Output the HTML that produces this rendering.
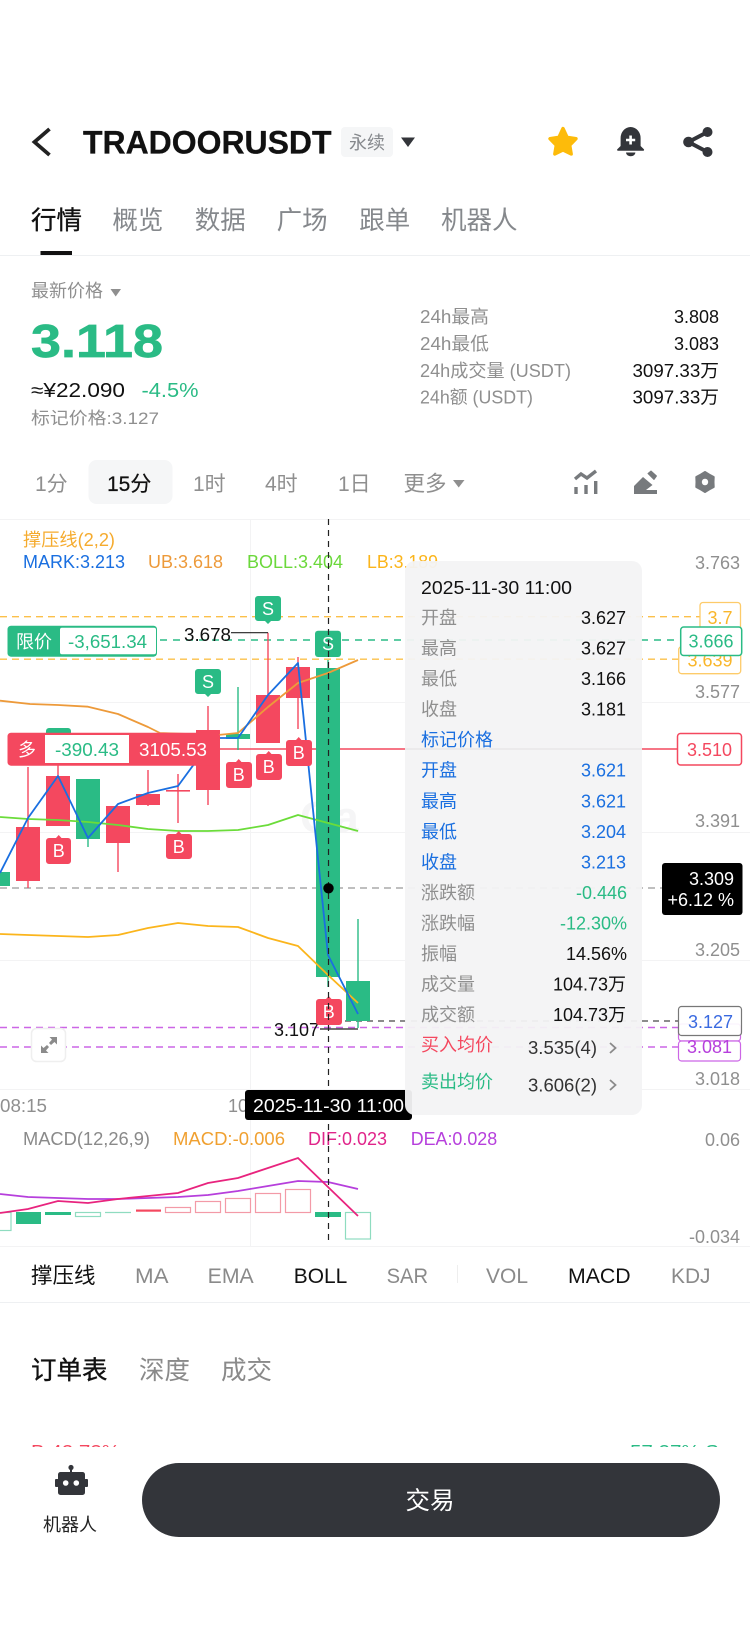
<!DOCTYPE html>
<html lang="zh"><head><meta charset="utf-8"><title>TRADOORUSDT</title>
<style>
html,body{margin:0;padding:0;background:#fff;width:750px;height:1631px;overflow:hidden}
svg{display:block}
body>svg{filter:blur(.3px)}
text{font-family:"Liberation Sans","Noto Sans CJK SC",sans-serif;font-size:18px;fill:#111}
.g{fill:#8f8f8f}
.gr{fill:#2abb85}
.bl{fill:#1a6fe0}
.w{fill:#fff}
.k{stroke:#111;stroke-width:.35px}
.r{text-anchor:end}
.m{text-anchor:middle}
</style></head><body>
<svg width="750" height="1631" viewBox="0 0 750 1631" xmlns="http://www.w3.org/2000/svg">
<rect width="750" height="1631" fill="#fff"/>

<!-- header -->
<path d="M49.5 129 L34.5 142 L49.5 155" fill="none" stroke="#222" stroke-width="3.8"/>
<text x="83" y="153.5" font-weight="700" style="font-size:32px;stroke:#111;stroke-width:.3px" textLength="248.5" lengthAdjust="spacingAndGlyphs">TRADOORUSDT</text>
<rect x="341" y="127" width="52" height="30" rx="4" fill="#f5f6f7"/>
<text x="349" y="149" style="font-size:18px;fill:#85888c">永续</text>
<path d="M401 137.5 H415 L408 147Z" fill="#33353a"/>
<path d="M563 128.5 L567.1 137.3 L576 138.7 L569.7 145.2 L571.2 154 L563 150 L554.8 154 L556.3 145.2 L550 138.7 L558.9 137.3Z" fill="#fdbb0a" stroke="#fdbb0a" stroke-width="3.4" stroke-linejoin="round"/>
<path d="M620.6 146 V138 a10 11 0 0 1 20 0 V146 l3.4 3.4 a1 1 0 0 1 -1 1.4 H618.2 a1 1 0 0 1 -1 -1.4Z" fill="#33353a"/>
<path d="M626 152.5 H635.4 a4.7 3.8 0 0 1 -9.4 0Z" fill="#33353a"/>
<path d="M630.6 135.5 V144.5 M626 140 H635.2" stroke="#fff" stroke-width="2.6"/>
<g fill="#33353a" stroke="#33353a"><circle cx="707.5" cy="132" r="5" stroke="none"/><circle cx="688.5" cy="142" r="5.3" stroke="none"/><circle cx="707.5" cy="152" r="5" stroke="none"/><path d="M707.5 132 L688.5 142 L707.5 152" fill="none" stroke-width="4"/></g>

<!-- tabs -->
<text x="31" y="229" class="k" style="font-size:25.5px">行情</text>
<text x="112.4" y="229" style="font-size:25.5px;fill:#85888c">概览</text>
<text x="194.7" y="229" style="font-size:25.5px;fill:#85888c">数据</text>
<text x="276.6" y="229" style="font-size:25.5px;fill:#85888c">广场</text>
<text x="359.3" y="229" style="font-size:25.5px;fill:#85888c">跟单</text>
<text x="441" y="229" style="font-size:25.5px;fill:#85888c">机器人</text>
<rect x="0" y="255" width="750" height="1" fill="#eef0f2"/>
<rect x="40.5" y="251" width="31.5" height="4" fill="#111"/>

<!-- price -->
<text x="31" y="297" class="g">最新价格</text>
<path d="M110.5 289 H121 L115.7 296.5Z" fill="#8f8f8f"/>
<text x="31" y="357" class="gr" font-weight="700" style="font-size:46.5px;stroke:#2abb85;stroke-width:.7px" textLength="132" lengthAdjust="spacingAndGlyphs">3.118</text>
<text x="31" y="397" style="font-size:20px" textLength="94" lengthAdjust="spacingAndGlyphs">≈¥22.090</text>
<text x="141.5" y="397" class="gr" style="font-size:20px" textLength="57" lengthAdjust="spacingAndGlyphs">-4.5%</text>
<text x="31" y="424" class="g" style="font-size:17px" textLength="128" lengthAdjust="spacingAndGlyphs">标记价格:3.127</text>
<text x="420" y="323" class="g" textLength="69" lengthAdjust="spacingAndGlyphs">24h最高</text>
<text x="420" y="350" class="g" textLength="69" lengthAdjust="spacingAndGlyphs">24h最低</text>
<text x="420" y="377" class="g" textLength="151" lengthAdjust="spacingAndGlyphs">24h成交量 (USDT)</text>
<text x="420" y="403.5" class="g" textLength="113" lengthAdjust="spacingAndGlyphs">24h额 (USDT)</text>
<text x="719" y="323" class="r">3.808</text>
<text x="719" y="350" class="r">3.083</text>
<text x="632.5" y="377" textLength="86.5" lengthAdjust="spacingAndGlyphs">3097.33万</text>
<text x="632.5" y="403.5" textLength="86.5" lengthAdjust="spacingAndGlyphs">3097.33万</text>

<!-- time row -->
<rect x="88.5" y="460" width="84" height="44" rx="8" fill="#f5f6f7"/>
<g>
<text x="35" y="491" class="g" style="font-size:21px">1分</text>
<text x="107" y="491" class="k" style="font-size:21px;stroke-width:.2px">15分</text>
<text x="193" y="491" class="g" style="font-size:21px">1时</text>
<text x="265" y="491" class="g" style="font-size:21px">4时</text>
<text x="338" y="491" class="g" style="font-size:21px">1日</text>
<text x="403.5" y="491" class="g" style="font-size:21.5px">更多</text>
</g>
<path d="M453 480 H464.5 L458.7 487.5Z" fill="#8f8f8f"/>
<g fill="none" stroke="#777a7d" stroke-width="3.4">
<path d="M575 479 L581 474 L587 478 L596 471"/>
<path d="M576 487 V494 M586 485 V494 M595.7 481 V494"/>
</g>
<path d="M634 486 L643 477 L652.5 485 L646 490 H657 V494 H634Z" fill="#777a7d"/>
<path d="M648 473.5 L651 471 L656.5 476 L654 479.5Z" fill="#777a7d" stroke="#777a7d" stroke-width="1" stroke-linejoin="round"/>
<path fill-rule="evenodd" d="M705 472 L709.25 474.6 L713.7 477 L713.5 482 L713.7 487 L709.25 489.4 L705 492 L700.75 489.4 L696.3 487 L696.5 482 L696.3 477 L700.75 474.6Z M705 477.8 a4.2 4.2 0 1 0 .01 0Z" fill="#777a7d" stroke="#777a7d" stroke-width="2" stroke-linejoin="round"/>

<!-- chart grid -->
<g stroke="#f3f3f4" stroke-width="1">
<path d="M0 519.5 H750 M0 702.5 H750 M0 832.5 H750 M0 960.5 H750 M0 1089.5 H750 M0 1246.5 H750 M250.5 519 V1246"/>
</g>
<!-- watermark -->
<text x="300" y="832" font-weight="700" style="font-size:44px;fill:#f5f5f6">Ga</text>

<!-- horizontal lines -->
<g fill="none" stroke-width="1.4">
<path d="M0 616.7 H700" stroke="#fbc04a" stroke-dasharray="7 5"/>
<path d="M0 659.2 H680" stroke="#fbc04a" stroke-dasharray="7 5"/>
<path d="M160 640 H680" stroke="#2abb85" stroke-dasharray="7 6"/>
<path d="M220 749 H678" stroke="#f4485f"/>
<path d="M0 888 H662" stroke="#aaa" stroke-dasharray="7 5"/>
<path d="M345 1021 H678" stroke="#666" stroke-dasharray="6 5"/>
<path d="M0 1027.5 H678" stroke="#cc66e6" stroke-dasharray="7 5"/>
<path d="M0 1047 H678" stroke="#cc66e6" stroke-dasharray="7 5"/>
</g>

<!-- candles -->
<g fill="#f4485f" stroke="#f4485f">
<g stroke-width="1.4" fill="none">
<path d="M28 767 V888 M58 750 V776 M118 806 V872 M148 770 V806 M178 774 V823 M208 706 V805 M268 632.7 V695 M298 657 V729"/>
</g>
<g stroke="none">
<rect x="16" y="827" width="24" height="54"/>
<rect x="46" y="776" width="24" height="50"/>
<rect x="106" y="806" width="24" height="37"/>
<rect x="136" y="794" width="24" height="11"/>
<rect x="166" y="790" width="24" height="1.6"/>
<rect x="196" y="730" width="24" height="60"/>
<rect x="256" y="695" width="24" height="48"/>
<rect x="286" y="667" width="24" height="31"/>
</g>
</g>
<g fill="#2abb85" stroke="#2abb85">
<g stroke-width="1.4" fill="none">
<path d="M88 779 V847 M238 687 V750 M328 660 V987 M358 919 V1028"/>
</g>
<g stroke="none">
<rect x="-10" y="872" width="20" height="14"/>
<rect x="46" y="728" width="25" height="8" rx="3"/>
<rect x="76" y="779" width="24" height="60"/>
<rect x="226" y="734" width="24" height="5"/>
<rect x="316" y="668" width="24" height="309"/>
<rect x="346" y="981" width="24" height="40"/>
</g>
</g>

<!-- indicator lines -->
<g fill="none" stroke-width="1.8" stroke-linejoin="round">
<polyline stroke="#fbb51c" points="0,934 28,935 58,936 88,937 118,935 148,928 178,923 208,926 238,927 268,938 298,946 328,975 358,1003"/>
<polyline stroke="#6bdc3a" points="0,817 28,819 58,820 88,822 118,825 148,829 178,831 208,831 238,830 268,825 298,815 328,823 358,831"/>
<polyline stroke="#ed9a3a" points="0,700.7 30,704 58,705 88,706.7 118,714 148,727 160,733 218,735 238,733 268,707 298,683 328,673 358,660"/>
<polyline stroke="#1a6fe0" points="0,873 28,818 58,776 88,838 118,804 148,793 178,786 208,745 218,738 238,738 268,695 298,663 317,849 328,955 358,1014"/>
</g>

<!-- price callouts -->
<text x="184" y="641" textLength="47" lengthAdjust="spacingAndGlyphs">3.678</text>
<path d="M231 632.7 H268" stroke="#222" stroke-width="1.2"/>
<text x="274" y="1036" textLength="45" lengthAdjust="spacingAndGlyphs">3.107</text>
<path d="M320 1029 H358" stroke="#222" stroke-width="1.2"/>

<!-- S / B markers -->
<g>
<path d="M258 596 H278 a3 3 0 0 1 3 3 V618 a3 3 0 0 1 -3 3 H271 L268 624 L265 621 H258 a3 3 0 0 1 -3 -3 V599 a3 3 0 0 1 3 -3Z" fill="#2abb85"/>
<text x="268" y="615" class="w m" style="font-size:18px">S</text>
<path d="M198 669 H218 a3 3 0 0 1 3 3 V691 a3 3 0 0 1 -3 3 H211 L208 697 L205 694 H198 a3 3 0 0 1 -3 -3 V672 a3 3 0 0 1 3 -3Z" fill="#2abb85"/>
<text x="208" y="688" class="w m">S</text>
<path d="M229 762 H236 L238.7 759 L241.5 762 H249 a3 3 0 0 1 3 3 V785 a3 3 0 0 1 -3 3 H229 a3 3 0 0 1 -3 -3 V765 a3 3 0 0 1 3 -3Z" fill="#f4485f"/>
<text x="238.7" y="781" class="w m">B</text>
<path d="M259 754 H266 L268.7 751 L271.5 754 H279 a3 3 0 0 1 3 3 V777 a3 3 0 0 1 -3 3 H259 a3 3 0 0 1 -3 -3 V757 a3 3 0 0 1 3 -3Z" fill="#f4485f"/>
<text x="268.7" y="773" class="w m">B</text>
<path d="M289 740 H296 L298.7 737 L301.5 740 H309 a3 3 0 0 1 3 3 V763 a3 3 0 0 1 -3 3 H289 a3 3 0 0 1 -3 -3 V743 a3 3 0 0 1 3 -3Z" fill="#f4485f"/>
<text x="298.7" y="759" class="w m">B</text>
<path d="M49 838 H56 L58.7 835 L61.5 838 H68 a3 3 0 0 1 3 3 V861 a3 3 0 0 1 -3 3 H49 a3 3 0 0 1 -3 -3 V841 a3 3 0 0 1 3 -3Z" fill="#f4485f"/>
<text x="58.7" y="857" class="w m">B</text>
<path d="M169 834 H176 L178.7 831 L181.5 834 H189 a3 3 0 0 1 3 3 V856 a3 3 0 0 1 -3 3 H169 a3 3 0 0 1 -3 -3 V837 a3 3 0 0 1 3 -3Z" fill="#f4485f"/>
<text x="178.7" y="853" class="w m">B</text>
</g>

<!-- 限价 badge -->
<rect x="7.5" y="625.7" width="149.5" height="31" rx="3.5" fill="#2abb85"/>
<rect x="60" y="627.7" width="96" height="26.5" rx="2" fill="#fff"/>
<text x="16" y="648" class="w">限价</text>
<text x="68" y="648" class="gr" textLength="79" lengthAdjust="spacingAndGlyphs">-3,651.34</text>
<!-- 多 badge -->
<rect x="7.5" y="732.7" width="212.5" height="33" rx="3.5" fill="#f4485f"/>
<rect x="45" y="735" width="84" height="28" fill="#fff"/>
<text x="18" y="756" class="w">多</text>
<text x="55" y="756" class="gr" textLength="64" lengthAdjust="spacingAndGlyphs">-390.43</text>
<text x="139" y="756" class="w" textLength="68" lengthAdjust="spacingAndGlyphs">3105.53</text>

<!-- S and B on crosshair candle -->
<path d="M318 630.7 H338 a3 3 0 0 1 3 3 V654 a3 3 0 0 1 -3 3 H318 a3 3 0 0 1 -3 -3 V633.7 a3 3 0 0 1 3 -3Z" fill="#2abb85"/>
<text x="328" y="650" class="w m">S</text>
<path d="M319 999 H326 L328.7 996 L331.5 999 H339 a3 3 0 0 1 3 3 V1022 a3 3 0 0 1 -3 3 H319 a3 3 0 0 1 -3 -3 V1002 a3 3 0 0 1 3 -3Z" fill="#f4485f"/>
<text x="328.7" y="1018" class="w m">B</text>

<!-- legend -->
<text x="23" y="546" style="font-size:18px;fill:#f5ab2e" textLength="92" lengthAdjust="spacingAndGlyphs">撑压线(2,2)</text>
<text x="23" y="568" class="bl" textLength="102" lengthAdjust="spacingAndGlyphs">MARK:3.213</text>
<text x="148" y="568" style="fill:#ed9a3a" textLength="75" lengthAdjust="spacingAndGlyphs">UB:3.618</text>
<text x="247" y="568" style="fill:#6bd83b" textLength="96" lengthAdjust="spacingAndGlyphs">BOLL:3.404</text>
<text x="367" y="568" style="fill:#fbb51c" textLength="71" lengthAdjust="spacingAndGlyphs">LB:3.189</text>

<!-- expand btn -->
<rect x="31.5" y="1028.5" width="34" height="33" rx="5" fill="#fff" stroke="#efefef" stroke-width="1.5"/>
<g fill="#8b8b8b"><path d="M41 1053 V1045.5 L43.5 1048 L47 1045 L49 1047 L46 1050.5 L48.5 1053Z"/><path d="M57 1037 V1044.5 L54.5 1042 L51 1045 L49 1043 L52 1039.5 L49.5 1037Z"/></g>

<!-- axis bottom -->
<text x="0" y="1112" class="g" textLength="47" lengthAdjust="spacingAndGlyphs">08:15</text>
<text x="228" y="1112" class="g">10</text>

<!-- macd -->
<text x="23" y="1145" style="fill:#8a8a8a" textLength="127" lengthAdjust="spacingAndGlyphs">MACD(12,26,9)</text>
<text x="173" y="1145" style="fill:#f0a030" textLength="112" lengthAdjust="spacingAndGlyphs">MACD:-0.006</text>
<text x="308" y="1145" style="fill:#e0248a" textLength="79" lengthAdjust="spacingAndGlyphs">DIF:0.023</text>
<text x="410.7" y="1145" style="fill:#b63fdc" textLength="86.5" lengthAdjust="spacingAndGlyphs">DEA:0.028</text>
<g fill="none" stroke-width="1.2">
<g stroke="#8fdcc0"><rect x="-14" y="1212.5" width="25" height="18"/><rect x="75.5" y="1212.5" width="25" height="4"/><rect x="345.5" y="1212.5" width="25" height="26.5"/><path d="M105 1212.5 H131"/></g>
<g stroke="#f39aa7"><rect x="165.5" y="1207.5" width="25" height="5"/><rect x="195.5" y="1201.5" width="25" height="11"/><rect x="225.5" y="1198.5" width="25" height="14"/><rect x="255.5" y="1193.5" width="25" height="19"/><rect x="285.5" y="1189.5" width="25" height="23"/></g>
</g>
<rect x="16" y="1212" width="25" height="12" fill="#2abb85"/>
<rect x="45" y="1212" width="26" height="3" fill="#2abb85"/>
<rect x="136" y="1209.5" width="25" height="2.2" fill="#f4485f"/>
<rect x="315" y="1212" width="26" height="5" fill="#2abb85"/>
<polyline fill="none" stroke="#b63fdc" stroke-width="1.8" points="0,1194 28,1197 58,1198 88,1199 118,1199 148,1198 178,1197 208,1195 238,1191 268,1186 298,1181 328,1182 358,1189"/>
<polyline fill="none" stroke="#e8247e" stroke-width="1.8" points="0,1213 28,1209 58,1201 88,1203 118,1199 148,1196 178,1193 208,1183 238,1178 268,1168 298,1158 328,1187 358,1216"/>

<!-- crosshair -->
<path d="M328.5 519 V1243" stroke="#222" stroke-width="1.2" stroke-dasharray="6 5" fill="none"/>
<circle cx="328.5" cy="888.3" r="5.2" fill="#000"/>

<!-- time tag -->
<rect x="245" y="1090" width="167" height="30" rx="3" fill="#000"/>
<text x="253" y="1112" class="w" textLength="151" lengthAdjust="spacingAndGlyphs">2025-11-30 11:00</text>

<!-- right axis -->
<text x="740" y="569" class="g r">3.763</text>
<text x="740" y="698" class="g r">3.577</text>
<text x="740" y="827" class="g r">3.391</text>
<text x="740" y="956" class="g r">3.205</text>
<text x="740" y="1085" class="g r">3.018</text>
<text x="740" y="1146" class="g r">0.06</text>
<text x="740" y="1243" class="g r">-0.034</text>

<!-- tooltip -->
<rect x="405" y="561" width="237" height="554" rx="10" fill="#f3f3f4" fill-opacity=".95"/>
<path d="M405 749 H642" stroke="#e8e8e9" stroke-width="1.4"/>
<text x="421" y="594" textLength="151" lengthAdjust="spacingAndGlyphs">2025-11-30 11:00</text>
<g>
<text x="421" y="624" class="g">开盘</text><text x="626" y="624" class="r">3.627</text>
<text x="421" y="654.7" class="g">最高</text><text x="626" y="654.7" class="r">3.627</text>
<text x="421" y="685" class="g">最低</text><text x="626" y="685" class="r">3.166</text>
<text x="421" y="715.7" class="g">收盘</text><text x="626" y="715.7" class="r">3.181</text>
<text x="421" y="746" class="bl">标记价格</text>
<text x="421" y="776.7" class="bl">开盘</text><text x="626" y="776.7" class="r bl">3.621</text>
<text x="421" y="807.7" class="bl">最高</text><text x="626" y="807.7" class="r bl">3.621</text>
<text x="421" y="838" class="bl">最低</text><text x="626" y="838" class="r bl">3.204</text>
<text x="421" y="868.3" class="bl">收盘</text><text x="626" y="868.3" class="r bl">3.213</text>
<text x="421" y="899" class="g">涨跌额</text><text x="627" y="899" class="r gr">-0.446</text>
<text x="421" y="929.3" class="g">涨跌幅</text><text x="627" y="929.3" class="r gr">-12.30%</text>
<text x="421" y="960" class="g">振幅</text><text x="627" y="960" class="r">14.56%</text>
<text x="421" y="990.7" class="g">成交量</text><text x="626" y="990.7" class="r">104.73万</text>
<text x="421" y="1021" class="g">成交额</text><text x="626" y="1021" class="r">104.73万</text>
<text x="421" y="1051" style="fill:#f4485f">买入均价</text><text x="528" y="1054" style="fill:#333" textLength="69" lengthAdjust="spacingAndGlyphs">3.535(4)</text>
<text x="421" y="1088" class="gr">卖出均价</text><text x="528" y="1091.7" style="fill:#333" textLength="69" lengthAdjust="spacingAndGlyphs">3.606(2)</text>
</g>
<path d="M610 1043 L615.5 1048 L610 1053 M610 1080 L615.5 1085 L610 1090" fill="none" stroke="#8a8a8a" stroke-width="1.8"/>

<!-- right tags -->
<rect x="700" y="602.5" width="40.5" height="30" rx="3" fill="#fff" stroke="#fdcb6a" stroke-width="1.3"/>
<text x="720" y="624" class="m" style="fill:#f9b62a">3.7</text>
<rect x="678.7" y="646.7" width="62" height="27" rx="3" fill="#fff" stroke="#fdcb6a" stroke-width="1.3"/>
<text x="710" y="666.5" class="m" style="fill:#f9b62a">3.639</text>
<rect x="680.7" y="627" width="61" height="28.5" rx="3" fill="#fff" stroke="#2abb85" stroke-width="1.5"/>
<text x="711" y="647.7" class="m gr">3.666</text>
<rect x="677.5" y="733.5" width="64" height="31.5" rx="3" fill="#fff" stroke="#f4485f" stroke-width="1.5"/>
<text x="709.5" y="756" class="m" style="fill:#f4485f">3.510</text>
<rect x="662" y="863" width="80.5" height="52" rx="3" fill="#000"/>
<text x="734" y="885" class="w r">3.309</text>
<text x="734" y="906" class="w r">+6.12 %</text>
<rect x="678.5" y="1024" width="62" height="17" rx="3" fill="#fff" stroke="#cc66e6" stroke-width="1.2"/>
<rect x="678.5" y="1041" width="62" height="20" rx="3" fill="#fff" stroke="#cc66e6" stroke-width="1.2"/>
<text x="709.5" y="1053" class="m" style="fill:#b63fdc">3.081</text>
<rect x="678.5" y="1006.5" width="63" height="29" rx="3" fill="#fff" fill-opacity=".92" stroke="#777" stroke-width="1.2"/>
<text x="710.5" y="1028" class="m" style="fill:#3a6ae0">3.127</text>

<!-- indicators tab row -->
<g>
<text x="31" y="1283" style="font-size:21.5px">撑压线</text>
<text x="135" y="1283" style="font-size:21px;fill:#8a8a8a" textLength="33.5" lengthAdjust="spacingAndGlyphs">MA</text>
<text x="207.7" y="1283" style="font-size:21px;fill:#8a8a8a" textLength="46" lengthAdjust="spacingAndGlyphs">EMA</text>
<text x="293.8" y="1283" style="font-size:21px" textLength="53.5" lengthAdjust="spacingAndGlyphs">BOLL</text>
<text x="386.6" y="1283" style="font-size:21px;fill:#8a8a8a" textLength="41.5" lengthAdjust="spacingAndGlyphs">SAR</text>
<text x="486" y="1283" style="font-size:21px;fill:#8a8a8a" textLength="42" lengthAdjust="spacingAndGlyphs">VOL</text>
<text x="568" y="1283" style="font-size:21px" textLength="62.6" lengthAdjust="spacingAndGlyphs">MACD</text>
<text x="671" y="1283" style="font-size:21px;fill:#8a8a8a" textLength="39.5" lengthAdjust="spacingAndGlyphs">KDJ</text>
</g>
<rect x="457" y="1265" width="1" height="18" fill="#eee"/>
<rect x="0" y="1302" width="750" height="1" fill="#eef0f2"/>

<!-- order tabs -->
<text x="31" y="1379" class="k" style="font-size:25.5px">订单表</text>
<text x="139" y="1379" style="font-size:25.5px;fill:#8a8a8a">深度</text>
<text x="221" y="1379" style="font-size:25.5px;fill:#8a8a8a">成交</text>

<!-- clipped ratios -->
<svg x="0" y="1440" width="750" height="7" viewBox="0 1440 750 7">
<text x="31" y="1458" style="fill:#f4485f" textLength="89" lengthAdjust="spacingAndGlyphs">B 42.73%</text>
<text x="630" y="1458" class="gr" textLength="89" lengthAdjust="spacingAndGlyphs">57.27% S</text>
</svg>

<!-- bottom bar -->
<g fill="#33353a">
<circle cx="71" cy="1467.5" r="2.6"/><rect x="70" y="1468" width="2" height="5"/>
<rect x="58" y="1472" width="27" height="23" rx="2.5"/>
<rect x="55" y="1479" width="3.5" height="8" rx="1"/><rect x="84.5" y="1479" width="3.5" height="8" rx="1"/>
</g>
<circle cx="65.7" cy="1483" r="2.8" fill="#fff"/><circle cx="76.3" cy="1483" r="2.8" fill="#fff"/>
<text x="43" y="1531" style="font-size:18px;fill:#222">机器人</text>
<rect x="142" y="1463" width="578" height="74" rx="37" fill="#33353a"/>
<text x="405.5" y="1509" class="w" style="font-size:24.5px">交易</text>
</svg>
</body></html>
